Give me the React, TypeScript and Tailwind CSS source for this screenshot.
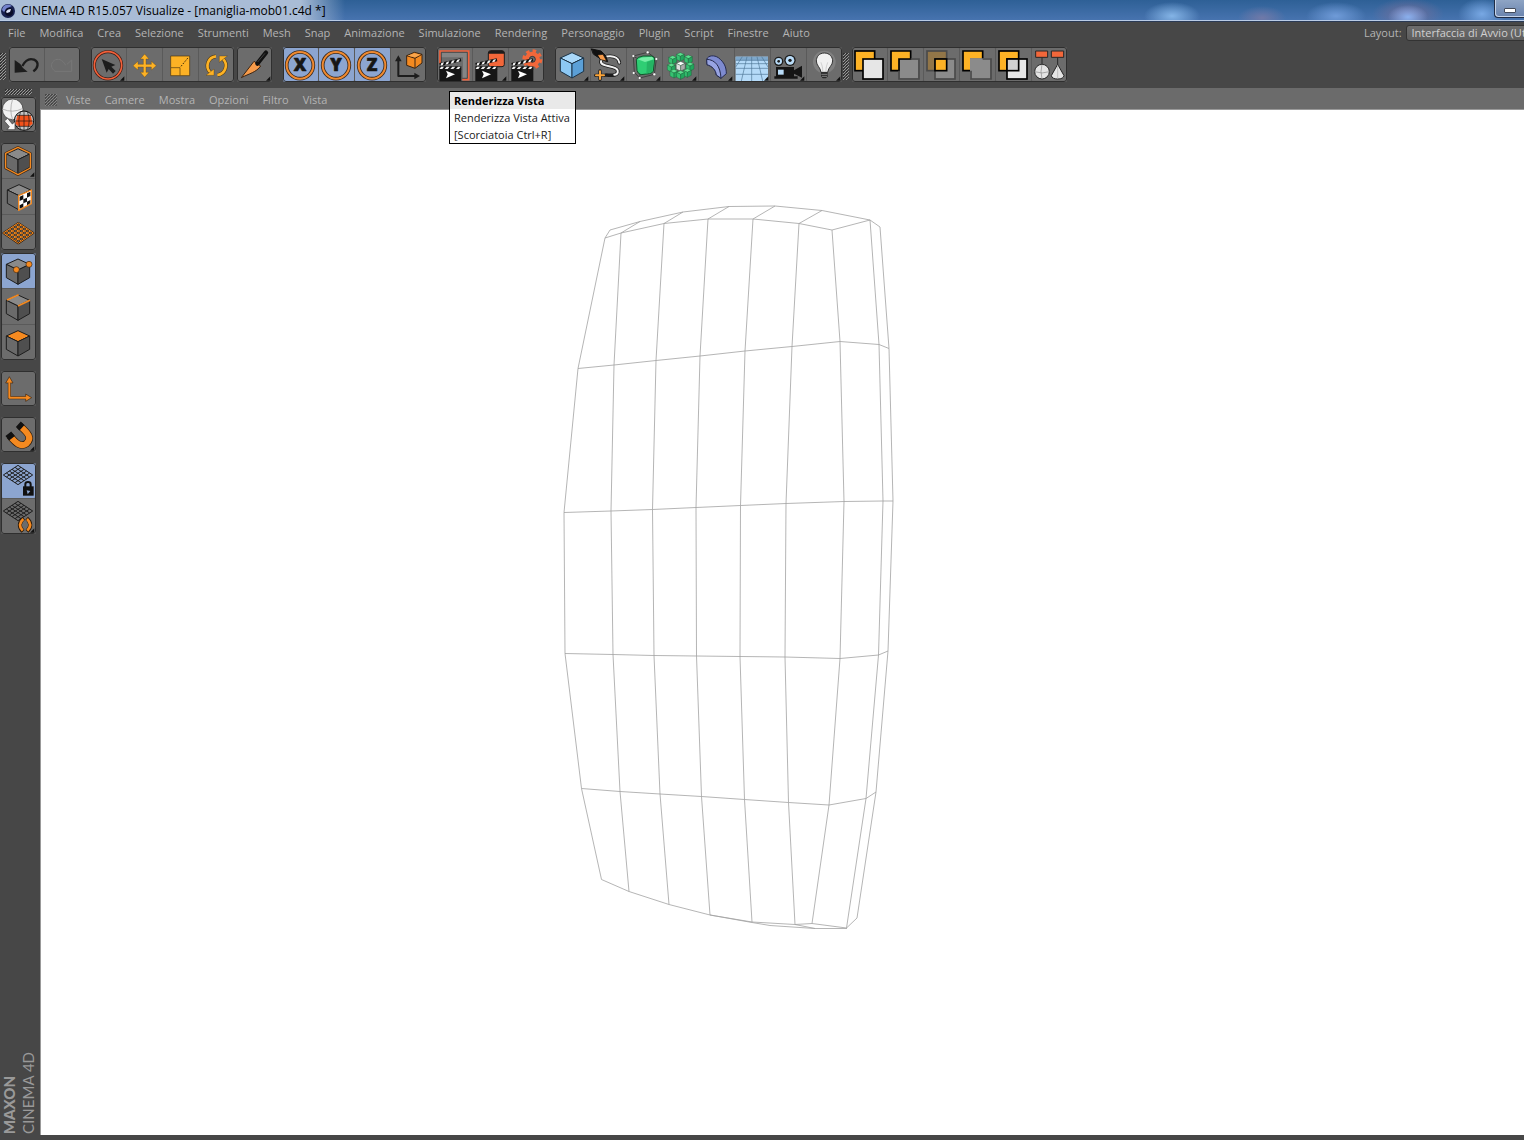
import React from "react";

const menus = ["File", "Modifica", "Crea", "Selezione", "Strumenti", "Mesh", "Snap", "Animazione", "Simulazione", "Rendering", "Personaggio", "Plugin", "Script", "Finestre", "Aiuto"];
const viewMenus = ["Viste", "Camere", "Mostra", "Opzioni", "Filtro", "Vista"];

const INK = "#1d1d1d";
const ORANGE = "#f58a20";
const AMBER = "#fdb225";

type Tool = { label: string; icon: React.ReactNode; active?: boolean; more?: boolean; disabled?: boolean; tip?: boolean };

function Art({ children, more }: { children: React.ReactNode; more?: boolean }) {
  return (
    <svg viewBox="0 0 105 105" className="block size-[35px]" aria-hidden="true" strokeLinejoin="round">
      {children}
      {more && <path d="M100 88v13H87z" fill="#111" />}
    </svg>
  );
}

/* ---------- shared shapes ---------- */

function Cube({ x = 0, y = 0, top = "#8a8a8a", left = "#6a6a6a", right = "#4f4f4f", line = INK }: { x?: number; y?: number; top?: string; left?: string; right?: string; line?: string }) {
  return (
    <g transform={`translate(${x} ${y})`} stroke={line} strokeWidth="3">
      <path d="M51 17L86 33 51 50 16 33z" fill={top} />
      <path d="M16 33L51 50V93L16 73z" fill={left} />
      <path d="M86 33L51 50V93L86 73z" fill={right} />
    </g>
  );
}

function MiniCube({ x, y, s = 1, top = "#5be08e", left = "#36c271", right = "#22a75d" }: { x: number; y: number; s?: number; top?: string; left?: string; right?: string }) {
  return (
    <g transform={`translate(${x} ${y}) scale(${s})`} stroke="#14532d" strokeWidth="1">
      <path d="M0-13L12-8 0-2-12-8z" fill={top} />
      <path d="M-12-8L0-2V13L-12 7z" fill={left} />
      <path d="M12-8L0-2V13L12 7z" fill={right} />
    </g>
  );
}

function Clapper() {
  return (
    <g>
      <rect x="7" y="67" width="66" height="35" fill="#161616" />
      <path d="M7 58H73V68H7zM7 48L71 34 73 43 9 58z" fill="#111" />
      <path d="M12 59H21L16 66H8zM29 59H38L32 66H23zM46 59H55L49 66H40zM63 59H71L66 66H57zM13 48L21 46 17 55 10 56zM29 45L37 43 33 51 25 53zM45 41L53 39 49 48 41 50zM61 38L69 36 65 44 57 46z" fill="#f2f2f2" />
      <path d="M27 71L54 82 27 94 32 82z" fill="#fff" />
    </g>
  );
}

function Axis({ letter }: { letter: string }) {
  return (
    <g>
      <circle cx="51" cy="55" r="40" fill="none" stroke="#3b2a1d" strokeWidth="11" />
      <circle cx="51" cy="55" r="40" fill="none" stroke="#f08a30" strokeWidth="6" />
      <text x="51" y="73" textAnchor="middle" fontSize="52" className="font-['Open_Sans',sans-serif] font-extrabold" fill="#161616" stroke="#161616" strokeWidth="2">{letter}</text>
    </g>
  );
}

const PLANE_GRID = "M52 24L97 54 52 85 7 54zM43 30L88 60M34 36L79 66M25 42L70 72M16 48L61 78M61 30L16 60M70 36L25 66M79 42L34 72M88 48L43 78";

function SmallLattice() {
  return (
    <g stroke={INK} strokeWidth="3" fill="none">
      <path d="M51 7L95 36 51 65 7 36z" />
      <path d="M42 13L86 42M33 19L77 48M25 24L69 53M16 30L60 59M60 13L16 42M69 19L25 48M77 24L33 53M86 30L42 59" />
    </g>
  );
}

/* ---------- icons ---------- */

const undo = (
  <g>
    <path d="M40 57C50 38 64 34 75 38 91 46 88 62 73 73" fill="none" stroke={INK} strokeWidth="7" />
    <path d="M17 39V77L56 74 42 63 34 51z" fill={INK} />
  </g>
);
const redo = (
  <g stroke="#777" strokeWidth="3" fill="none">
    <path d="M62 55C52 36 38 34 28 40 15 50 18 64 30 73H80V39L66 52" />
  </g>
);
const pick = (
  <g>
    <circle cx="51" cy="55" r="41" fill="none" stroke="#3c1c14" strokeWidth="9" />
    <circle cx="51" cy="55" r="41" fill="none" stroke="#f2603a" strokeWidth="5" />
    <path d="M32 36L73 54 61 59 74 72 66 80 53 66 47 77z" fill={INK} />
  </g>
);
const move = (
  <path d="M53 21L66 36H57V52H73V43L88 56 73 69V60H57V76H66L53 91 40 76H49V60H33V69L18 56 33 43V52H49V36H40z" fill={AMBER} stroke="#5a4010" strokeWidth="1" />
);
const scale = (
  <g>
    <path d="M23 27H80V86H23z" fill={AMBER} stroke="#4a3510" strokeWidth="2" />
    <path d="M24 62H51V85" fill="none" stroke="#4a3510" strokeWidth="2" />
    <path d="M54 58L77 30" stroke="#3a2a0c" strokeWidth="3" strokeDasharray="5 4" />
  </g>
);
const rotate = (
  <g>
    <g fill="none" stroke="#4a3510" strokeWidth="11"><path d="M50 28A28 28 0 0 0 34 76M56 84A28 28 0 0 0 72 36" /></g>
    <g fill="none" stroke={AMBER} strokeWidth="8"><path d="M51 28A28 28 0 0 0 34 76M55 84A28 28 0 0 0 72 36" /></g>
    <path d="M21 85H45V66zM85 27H61V46z" fill={AMBER} stroke="#4a3510" strokeWidth="1" />
  </g>
);
const knife = (
  <g>
    <path d="M13 92L51 43 71 57C58 76 36 80 13 92z" fill="#f79b4a" stroke="#3a2412" strokeWidth="3" />
    <path d="M61 50L87 17" stroke="#111" strokeWidth="13" strokeLinecap="round" />
    <path d="M62 45L84 19" stroke="#555" strokeWidth="2" />
  </g>
);
const coords = (
  <g>
    <path d="M22 40V87H72" fill="none" stroke={INK} strokeWidth="6" />
    <path d="M22 25L32 43H12zM87 87L70 77V97z" fill={INK} />
    <path d="M47 26L70 16 93 22 93 48 72 64 47 55z" fill={ORANGE} stroke="#3a2412" strokeWidth="3" />
    <path d="M47 26L72 34 93 22M72 34V63" fill="none" stroke="#3a2412" strokeWidth="3" />
    <path d="M50 26L70 19 89 23 72 31z" fill="#f9a54d" />
  </g>
);
const renderView = (
  <g strokeLinejoin="miter">
    <path d="M11 13H94V98H78V31H11z" fill="#858585" />
    <path d="M9 50V12H95V98H76" fill="none" stroke="#f2603a" strokeWidth="5" strokeLinejoin="miter" />
    <path d="M13 50V16H91V94H76" fill="none" stroke="#2a2a2a" strokeWidth="2" strokeLinejoin="miter" />
    <Clapper />
  </g>
);
const renderPicture = (
  <g>
    <rect x="46" y="11" width="48" height="48" rx="7" fill="#f2673a" stroke={INK} strokeWidth="3" />
    <path d="M46 20V16Q48 11 53 11H87Q93 11 94 16V20z" fill={INK} />
    <Clapper />
  </g>
);
const renderSettings = (
  <g>
    <circle cx="70" cy="37" r="24" fill="none" stroke="#f2673a" strokeWidth="12" strokeDasharray="10 8.850" />
    <circle cx="70" cy="37" r="16" fill="none" stroke="#f2673a" strokeWidth="14" />
    <circle cx="70" cy="37" r="9" fill="#6c6c6c" stroke={INK} strokeWidth="2" />
    <Clapper />
  </g>
);
const spline = (
  <g fill="none" strokeLinecap="round">
    <path d="M85 47C82 22 34 22 30 43 27 61 75 54 80 70 83 86 64 86 45 84" stroke={INK} strokeWidth="11" />
    <path d="M85 47C82 22 34 22 30 43 27 61 75 54 80 70 82 80 76 83 70 83" stroke="#f2f2f2" strokeWidth="6" />
    <path d="M2 6L30 12 44 26 50 44 32 38 8 22z" fill="#111" stroke="#111" strokeWidth="3" />
    <path d="M20 24L36 22 47 42 29 38z" fill="#f79b4a" stroke="#111" strokeWidth="2" />
    <path d="M27 72V97M14 85H40" stroke={INK} strokeWidth="10" />
    <path d="M27 73V96M15 85H39" stroke="#fba53a" strokeWidth="6" />
  </g>
);
const nurbs = (
  <g>
    <path d="M19 27L62 16 88 36 82 82 38 93 22 76zM19 27L42 42 88 36M42 42L38 93" fill="none" stroke="#2a2a2a" strokeWidth="2" />
    <path d="M28 38Q30 30 48 27L74 27Q83 30 83 36L79 72Q77 78 68 80L42 83Q32 80 30 70z" fill="#2fce74" stroke="#14532d" strokeWidth="3" />
    <path d="M32 37Q44 28 76 30L80 37 54 45z" fill="#76eea6" />
    <path d="M60 45L80 38 76 74 58 80z" fill="#25b464" />
    <g fill="#fff" stroke="#333"><circle cx="19" cy="27" r="4" /><circle cx="62" cy="16" r="4" /><circle cx="88" cy="36" r="4" /><circle cx="82" cy="82" r="4" /><circle cx="38" cy="93" r="4" /><circle cx="20" cy="78" r="4" /></g>
  </g>
);
const array = (
  <g>
    <MiniCube x={52} y={30} /><MiniCube x={76} y={37} /><MiniCube x={29} y={39} />
    <MiniCube x={81} y={59} /><MiniCube x={25} y={62} />
    <MiniCube x={53} y={58} s={1.1} top="#fff" left="#ddd" right="#aaa" />
    <MiniCube x={73} y={78} /><MiniCube x={33} y={80} /><MiniCube x={53} y={84} />
  </g>
);
const bend = (
  <g stroke="#252a4d" strokeWidth="3">
    <path d="M23 37C28 24 46 24 58 32 76 46 82 60 82 80L66 94 52 84C50 68 40 58 24 53z" fill="#7e8bd0" />
    <path d="M23 37C48 38 64 56 66 94L52 84C50 68 40 58 24 53z" fill="#98a4e2" />
  </g>
);
const floor = (
  <g>
    <rect x="2" y="29" width="97" height="74" fill="#b5daf8" />
    <path d="M2 29H99V40H2z" fill="#7fa8cb" />
    <path d="M2 40H99M2 50H99M2 64H99M2 82H99M50 29V102M36 29L19 102M66 29L83 102M22 29L2 60M80 29L99 60" stroke="#4d7596" strokeWidth="2" fill="none" />
  </g>
);
const camera = (
  <g>
    <circle cx="23" cy="43" r="14" fill={INK} /><circle cx="57" cy="40" r="17" fill={INK} />
    <circle cx="23" cy="43" r="10" fill="#b9dcf8" /><circle cx="57" cy="40" r="13" fill="#b9dcf8" />
    <circle cx="23" cy="43" r="4" fill={INK} /><circle cx="57" cy="40" r="5" fill={INK} />
    <path d="M15 60H69V70L93 56V92L69 80V92H15zM10 88H80V95H10z" fill="#151515" />
    <rect x="21" y="68" width="17" height="15" fill="#b9dcf8" />
  </g>
);
const bulb = (
  <g>
    <circle cx="52" cy="45" r="34" fill="#999" opacity=".45" />
    <path d="M52 18C36 18 28 30 28 42 28 56 40 60 42 76H62C64 60 77 56 77 42 77 30 68 18 52 18z" fill="#f1f1f1" stroke="#333" strokeWidth="3" />
    <path d="M47 74C48 58 42 50 42 46M57 74C56 58 62 50 62 46" stroke="#bbb" strokeWidth="2" fill="none" />
    <path d="M42 76H62V88L57 94H47L42 88z" fill="#282828" />
    <path d="M43 82H61M44 88H60" stroke="#aaa" strokeWidth="2" />
  </g>
);

const sq = { strokeWidth: 5, strokeLinejoin: "miter" as const };
const union = (
  <g {...sq} stroke="#000"><rect x="9" y="12" width="59" height="59" fill={AMBER} /><rect x="33" y="36" width="60" height="60" fill="#e6e6e6" /></g>
);
const subtract = (
  <g {...sq}><path d="M9 12H68V36H33V71H9z" fill={AMBER} stroke="#000" /><path d="M68 36H93V96H33V71" fill="none" stroke="#4a4a4a" /><path d="M36 39H90V93H36z" fill="#8b8b8b" /></g>
);
const intersect = (
  <g {...sq}><rect x="9" y="12" width="59" height="59" fill="#927648" stroke="#4a4a4a" /><rect x="33" y="36" width="60" height="60" fill="#8b8b8b" stroke="#4a4a4a" /><rect x="33" y="36" width="35" height="35" fill={AMBER} stroke="#000" /></g>
);
const without = (
  <g {...sq}><path d="M9 12H68V34H30V71H9z" fill={AMBER} /><path d="M33 71H9V12H68V36" fill="none" stroke="#000" /><rect x="30" y="34" width="61" height="61" fill="#8b8b8b" /><path d="M68 36H93V96H33V71" fill="none" stroke="#4a4a4a" /></g>
);
const both = (
  <g {...sq} stroke="#000"><rect x="9" y="12" width="59" height="59" fill={AMBER} /><rect x="33" y="36" width="60" height="60" fill="#e6e6e6" /><rect x="33" y="36" width="35" height="35" fill="#d0d0d0" /></g>
);
const hierarchy = (
  <g stroke="#262626" strokeWidth="3">
    <path d="M30 31V52M77 31V52" />
    <rect x="11" y="12" width="36" height="19" fill="#f2673a" /><rect x="58" y="12" width="37" height="19" fill="#f2673a" />
    <circle cx="30" cy="74" r="22" fill="#e4e4e4" />
    <path d="M8 74Q30 82 52 74M30 52Q24 74 30 96" fill="none" stroke="#888" strokeWidth="2" />
    <path d="M77 52L58 86Q60 96 77 96 94 96 96 86z" fill="#e4e4e4" />
    <path d="M77 54V94" stroke="#aaa" strokeWidth="2" />
  </g>
);

const convert = (
  <g strokeWidth="2">
    <circle cx="35" cy="37" r="31" fill="#f1f1f1" stroke="#333" /><path d="M4 36Q35 50 66 34M35 6Q24 40 35 68" fill="none" stroke="#999" />
    <circle cx="69" cy="71" r="29" fill="#c4c4c4" stroke="#111" strokeWidth="3" />
    <path d="M49 55H89L95 80 86 88H52L43 80z" fill="#f2521c" />
    <path d="M41 72H97M47 55H91M46 88H92M69 42V100M59 44Q48 72 59 98M79 44Q90 72 79 98" fill="none" stroke="#151515" strokeWidth="2" />
    <path d="M10 72L20 64 34 81 42 74 42 98 18 98 25 89z" fill="#f7f7f7" stroke="#333" />
  </g>
);
const HEX = "M51 13L88 31V75L51 95 14 75V31z";
const modelMode = (
  <g>
    <path d={HEX} fill="none" stroke="#3a2412" strokeWidth="8" />
    <Cube />
    <path d={HEX} fill="none" stroke={ORANGE} strokeWidth="4" />
  </g>
);
const textureMode = (
  <g>
    <Cube x={3} />
    <path d="M91 33L53 50V94L91 74z" fill="#fff" stroke={ORANGE} strokeWidth="4" />
    <path d="M56 53L67 48V61L56 66zM78 43L88 38V51L78 56zM67 61L78 56V68L67 73zM56 79L67 73V84L56 89zM78 68L88 63V73L78 79z" fill="#111" />
  </g>
);
const plane = (
  <g fill="none">
    <path d={PLANE_GRID} stroke="#2a1a0c" strokeWidth="6" />
    <path d={PLANE_GRID} stroke={ORANGE} strokeWidth="3" />
  </g>
);
const pointMode = (
  <g><Cube y={1} /><g fill={ORANGE} stroke="#3a2412" strokeWidth="2"><circle cx="46" cy="50" r="9" /><circle cx="84" cy="34" r="9" /></g></g>
);
const edgeMode = (
  <g><Cube y={1} /><path d="M18 33L53 17M51 51L87 34" stroke={ORANGE} strokeWidth="5" /></g>
);
const polyMode = <Cube top={ORANGE} />;
const axisMode = (
  <g>
    <path d="M25 34V80H78" fill="none" stroke="#3a2412" strokeWidth="9" /><path d="M25 17L36 36H14zM92 80L74 69V91z" fill={ORANGE} stroke="#3a2412" strokeWidth="2" /><path d="M25 34V80H78" fill="none" stroke={ORANGE} strokeWidth="6" />
  </g>
);
const magnet = (
  <g fill="none">
    <path d="M26 56C44 78 58 92 76 80 94 64 84 50 56 26" stroke="#2a1a0c" strokeWidth="22" />
    <path d="M26 56C44 78 58 92 76 80 94 64 84 50 56 26" stroke={ORANGE} strokeWidth="18" />
    <path d="M33 64L22 50M63 32L52 22" stroke="#111" strokeWidth="22" />
  </g>
);
const lockPlane = (
  <g><SmallLattice /><path d="M73 72V64Q73 57 81 57 89 57 89 64V72" fill="none" stroke="#111" strokeWidth="6" /><rect x="66" y="70" width="32" height="28" fill="#111" /><path d="M77 82L88 84 80 94z" fill="#8ca5d0" /></g>
);
const autoPlane = (
  <g><SmallLattice /><g fill="none" stroke="#2a1a0c" strokeWidth="12"><path d="M68 58Q46 77 66 97M77 58Q98 77 78 97" /></g><g fill="none" stroke={ORANGE} strokeWidth="8"><path d="M67 60Q48 77 65 95M78 60Q96 77 79 95" /></g></g>
);

const topGroups: Tool[][] = [
  [{ label: "Annulla", icon: undo }, { label: "Ripeti", icon: redo, disabled: true }],
  [{ label: "Selezione", icon: pick, more: true }, { label: "Muovi", icon: move }, { label: "Scala", icon: scale }, { label: "Ruota", icon: rotate }],
  [{ label: "Coltello", icon: knife, more: true }],
  [{ label: "Asse X", icon: <Axis letter="X" />, active: true }, { label: "Asse Y", icon: <Axis letter="Y" />, active: true }, { label: "Asse Z", icon: <Axis letter="Z" />, active: true }, { label: "Sistema di coordinate", icon: coords }],
  [{ label: "Renderizza Vista", icon: renderView, tip: true }, { label: "Renderizza nel Visualizzatore", icon: renderPicture, more: true }, { label: "Impostazioni di Rendering", icon: renderSettings }],
  [
    { label: "Cubo", icon: <Cube top="#a9d8fa" left="#8cc8f4" right="#5b9fd6" line="#1c3448" />, more: true },
    { label: "Spline", icon: spline, more: true },
    { label: "Generatori", icon: nurbs, more: true },
    { label: "Modellazione", icon: array, more: true },
    { label: "Deformatori", icon: bend, more: true },
    { label: "Ambiente", icon: floor, more: true },
    { label: "Camera", icon: camera, more: true },
    { label: "Luce", icon: bulb, more: true },
  ],
];
const boolGroup: Tool[] = [
  { label: "Unione", icon: union }, { label: "Sottrazione", icon: subtract }, { label: "Intersezione", icon: intersect },
  { label: "Esclusione", icon: without }, { label: "Taglio", icon: both }, { label: "Gerarchia", icon: hierarchy },
];
const sideGroups: Tool[][] = [
  [{ label: "Rendi modificabile", icon: convert }],
  [{ label: "Modo Modello", icon: modelMode, more: true }, { label: "Modo Texture", icon: textureMode }, { label: "Piano di lavoro", icon: plane }],
  [{ label: "Modo Punti", icon: pointMode, active: true }, { label: "Modo Bordi", icon: edgeMode }, { label: "Modo Poligoni", icon: polyMode }],
  [{ label: "Modifica Asse", icon: axisMode }],
  [{ label: "Snap", icon: magnet, more: true }],
  [{ label: "Blocca piano", icon: lockPlane, active: true }, { label: "Piano automatico", icon: autoPlane, more: true }],
];
const topGaps = ["ml-0", "ml-[11px]", "ml-[3px]", "ml-[11px]", "ml-[11px]", "ml-[11px]"];
const sideGaps = ["mt-0", "mt-[11px]", "mt-[3px]", "mt-[11px]", "mt-[11px]", "mt-[11px]"];

function Tooltip() {
  return (
    <div role="tooltip" className="absolute left-3 top-11 z-10 whitespace-nowrap border border-black bg-white text-left text-[11px] leading-[17px] text-[#222]">
      <div className="bg-[#e9e9e9] px-1 font-bold text-black">Renderizza Vista</div>
      <div className="pl-1 pr-[5px]">Renderizza Vista Attiva</div>
      <div className="px-1">[Scorciatoia Ctrl+R]</div>
    </div>
  );
}

function ToolGroup({ tools, vertical, gap }: { tools: Tool[]; vertical?: boolean; gap: string }) {
  return (
    <div className={`${gap} relative shrink-0`}>
      <div className={`flex gap-px rounded-[3px] bg-[#5a5a5a] outline outline-1 -outline-offset-1 outline-[#2f2f2f] ${vertical ? "flex-col" : ""}`}>
        {tools.map((t) => (
          <button key={t.label} type="button" aria-label={t.label} disabled={t.disabled} className={`block size-[35px] shrink-0 rounded-[2px] ${t.active ? "bg-[#8ca5d0]" : "bg-[#6c6c6c]"}`}>
            <Art more={t.more}>{t.icon}</Art>
          </button>
        ))}
      </div>
      {tools[0].tip && <Tooltip />}
    </div>
  );
}

function Grip({ className }: { className: string }) {
  return <div className={`${className} shrink-0 bg-[linear-gradient(135deg,#333_0_34%,#999_34%_66%,#444_66%)] bg-[length:3px_3px]`} />;
}

/* ---------- wireframe of the handle ---------- */

const rows = [
  [[605, 238], [621, 233], [664, 223.5], [708, 219], [753, 219], [799, 223.5], [832, 230], [870, 220], [880, 227]],
  [[578, 368.5], [614, 365], [656, 360.5], [700, 356], [745, 351], [792, 346.5], [840, 341.5], [879, 344.5], [889, 348.5]],
  [[564, 512.5], [611, 511], [652.5, 509.5], [696, 507.5], [740.5, 505.5], [786, 503.5], [844, 501.5], [883, 501], [893, 501]],
  [[565, 653.5], [613, 654.5], [654, 655.5], [696.5, 656], [740, 656.5], [785, 657], [840, 658.5], [878.5, 655], [888, 651]],
  [[581.5, 788.5], [620, 791.5], [660, 794], [701.5, 796.5], [744.5, 799.5], [788.5, 802.5], [829, 805], [866, 798.5], [876, 792]],
  [[601.5, 879.5], [629, 891.5], [669, 904.5], [710, 915], [752, 922], [795, 924.5], [812, 923.5], [846.5, 928], [857, 918]],
];
const pts = (list: number[][]) => list.map((p) => p.join(",")).join(" ");

function Wireframe() {
  return (
    <svg className="block size-full" role="img" aria-label="Modello maniglia">
      <g transform="translate(-41 -110)" fill="none" stroke="#a2a2a2" strokeWidth="0.8">
        {rows.map((r, i) => <polyline key={i} points={pts(r)} />)}
        {rows[0].map((_, c) => <polyline key={c} points={pts(rows.map((r) => r[c]))} />)}
        <path d="M605 238L610 230 640 221.5 683 212 729 206.5 775 206 822 210.5 870 220M621 233L640 221.5M664 223.5L683 212M708 219L729 206.5M753 219L775 206M799 223.5L822 210.5" />
        <path d="M710 915L752 922.5 770 925.5 815 928.5H847M795 924.5L815 928.5" />
      </g>
    </svg>
  );
}

export default function App() {
  return (
    <div className="flex h-screen min-h-[600px] flex-col overflow-hidden bg-[#474747] font-['Open_Sans','Noto_Sans',sans-serif] text-[11px]">
      <header className="flex h-[22px] shrink-0 items-start border-b border-[#2a3a55] bg-[radial-gradient(ellipse_28px_14px_at_1172px_16px,#84b4e6,transparent),radial-gradient(ellipse_24px_12px_at_1262px_18px,#7079a8,transparent),radial-gradient(ellipse_30px_14px_at_1336px_16px,#6f9bd8,transparent),radial-gradient(ellipse_20px_12px_at_1408px_17px,#8ab0ee,transparent),radial-gradient(ellipse_36px_16px_at_1408px_14px,#74709c,transparent),radial-gradient(ellipse_24px_16px_at_1482px_14px,#78a8e4,transparent),linear-gradient(90deg,#a9bcd6_0,#a9bcd6_300px,transparent_345px),linear-gradient(#2e6096,#4874b0)]">
        <div className="flex h-[21px] w-full items-start border-b border-[#b9cbe6]">
          <svg viewBox="0 0 16 16" className="mt-[3px] size-4 shrink-0" aria-hidden="true">
            <circle cx="8" cy="8" r="7" fill="#17204f" />
            <path d="M2 7A6 6 0 0 1 12 3L7 5 4 9z" fill="#7382cc" />
            <circle cx="9" cy="9" r="4" fill="#0a0d28" />
            <path d="M6 9Q7 6 11 6L10 9 7 10z" fill="#dfe5fa" />
          </svg>
          <h1 className="ml-[5px] text-[12px] leading-[21px] text-black">CINEMA 4D R15.057 Visualize - [maniglia-mob01.c4d *]</h1>
          <button type="button" aria-label="Riduci a icona" className="ml-auto flex h-[18px] w-[30px] items-center justify-center rounded-bl-[4px] border-b border-l border-[#1f2c45] bg-gradient-to-b from-[#8ea4c4] to-[#6a84ae] shadow-[inset_1px_-1px_0_#c5d3e8]">
            <span className="mt-1 h-[5px] w-3 rounded-[1px] border border-[#444c5c] bg-white" />
          </button>
        </div>
      </header>

      <nav aria-label="Menu principale" className="flex h-[22px] shrink-0 items-center gap-[14px] overflow-hidden pl-2 text-[#b4b4b4]">
        {menus.map((m) => <button key={m} type="button" className="shrink-0">{m}</button>)}
        <div className="ml-auto flex w-40 shrink-0 items-center gap-1">
          <label htmlFor="layout">Layout:</label>
          <select id="layout" className="h-4 w-44 shrink-0 appearance-none rounded-[3px] border border-[#333] bg-gradient-to-b from-[#6d6d6d] to-[#5d5d5d] px-[5px] leading-[14px] text-[#d0d0d0]">
            <option>Interfaccia di Avvio (Utente)</option>
          </select>
        </div>
      </nav>

      <div role="toolbar" aria-label="Strumenti" className="flex h-11 shrink-0 items-start pt-[3px]">
        <Grip className="mr-[3px] mt-[6px] h-[27px] w-[6px]" />
        {topGroups.map((g, i) => <ToolGroup key={i} tools={g} gap={topGaps[i]} />)}
        <Grip className="ml-[1px] mt-[6px] h-[27px] w-[6px]" />
        <ToolGroup tools={boolGroup} gap="ml-[3px]" />
      </div>

      <div className="flex min-h-0 flex-1">
        <aside className="flex w-10 shrink-0 flex-col pl-px">
          <Grip className="mb-[2px] ml-1 mt-px h-[6px] w-[27px]" />
          <div className="w-[35px]">
            {sideGroups.map((g, i) => <ToolGroup key={i} tools={g} gap={sideGaps[i]} vertical />)}
          </div>
          <div className="mb-[6px] mt-auto flex items-end gap-[3px] font-['Lato',sans-serif] text-[15px] leading-4 text-[#999]">
            <span className="rotate-180 font-black [writing-mode:vertical-rl]">MAXON</span>
            <span className="rotate-180 [writing-mode:vertical-rl]">CINEMA 4D</span>
          </div>
        </aside>
        <main className="flex min-w-0 flex-1 flex-col">
          <div className="flex h-[21px] shrink-0 items-center gap-[14px] bg-[#6b6b6b] pl-[5px] pt-[3px] text-[#b4b4b4]">
            <Grip className="-mr-[5px] h-3 w-3 opacity-60" />
            {viewMenus.map((m) => <button key={m} type="button" className="shrink-0">{m}</button>)}
          </div>
          <section aria-label="Vista" className="mb-[5px] min-h-0 flex-1 border-l border-t border-[#999] bg-white">
            <Wireframe />
          </section>
        </main>
      </div>
    </div>
  );
}
